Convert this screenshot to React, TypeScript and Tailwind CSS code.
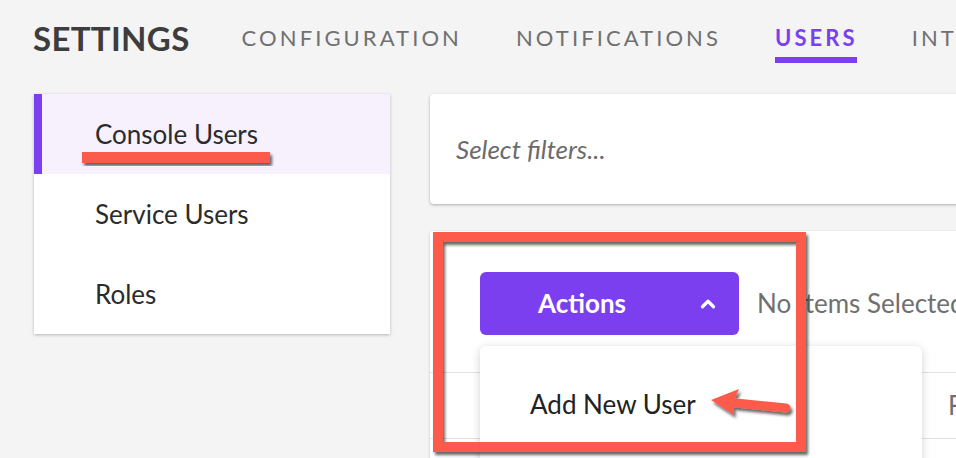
import { ChevronUp } from "lucide-react";

const tabs = ["CONFIGURATION", "NOTIFICATIONS", "USERS", "INTEGRATIONS"];
const sideItems = ["Console Users", "Service Users", "Roles"];

export default function App() {
  return (
    <div className="relative w-[956px] h-[458px] overflow-hidden bg-[#f4f4f4] font-['Lato',sans-serif]">
      {/* Top tabs */}
      <div className="flex items-start h-[94px] pl-[33px] pt-[18px] whitespace-nowrap">
        <h1 className="text-[33px] font-bold leading-[40px] text-[#3d3d3d] tracking-[0.01em] mr-[52px]">
          SETTINGS
        </h1>
        <nav className="flex gap-[54px]">
          {tabs.map((t) => {
            const active = t === "USERS";
            return (
              <div key={t} className="flex flex-col">
                <span
                  className={
                    active
                      ? "text-[22px] leading-[40px] tracking-[0.14em] font-bold text-[#7b3ff0]"
                      : "text-[22px] leading-[40px] tracking-[0.14em] text-[#707070]"
                  }
                >
                  {t}
                </span>
                {active && <span className="mt-[-1px] h-[6px] w-[82px] bg-[#7b3ff0]" />}
              </div>
            );
          })}
        </nav>
      </div>

      <div className="flex gap-[40px] pl-[34px]">
        {/* Sidebar */}
        <div className="w-[356px] shrink-0 self-start bg-white shadow-[0_1px_3px_rgba(0,0,0,0.25)]">
          {sideItems.map((s, i) => (
            <div
              key={s}
              className={
                i === 0
                  ? "h-[80px] flex items-center pl-[53px] bg-[#f6f1fd] border-l-[8px] border-[#7b3ff0] text-[26px] text-[#2b2b2b]"
                  : "h-[80px] flex items-center pl-[61px] text-[26px] text-[#2b2b2b]"
              }
            >
              {s}
            </div>
          ))}
        </div>

        {/* Right column */}
        <div className="w-[700px] shrink-0 flex flex-col gap-[27px]">
          <div className="h-[110px] flex items-center pl-[26px] bg-white rounded-[4px] shadow-[0_1px_3px_rgba(0,0,0,0.3)]">
            <span className="italic text-[26px] text-[#6b6b6b]">Select filters...</span>
          </div>

          <div className="relative h-[260px] bg-white rounded-[4px] shadow-[0_1px_3px_rgba(0,0,0,0.2)]">
            <div className="flex items-center pt-[41px] pl-[50px] whitespace-nowrap">
              <button className="w-[259px] h-[63px] shrink-0 rounded-[6px] bg-[#7b3ff0] flex items-center pl-[58px] pr-[20px] text-white">
                <span className="text-[26px] font-bold">Actions</span>
                <ChevronUp className="ml-auto" size={22} strokeWidth={3.5} />
              </button>
              <span className="ml-[18px] text-[26px] text-[#707070]">No Items Selected</span>
            </div>
            <div className="mt-[37px] border-t border-[#e2e2e2] h-[66px] flex items-center pl-[518px] text-[26px] text-[#707070]">
              F
            </div>
            <div className="border-t border-[#e2e2e2]" />

            {/* Dropdown menu */}
            <div className="absolute left-[50px] top-[115px] w-[442px] h-[200px] bg-white rounded-[6px] shadow-[0_2px_10px_rgba(0,0,0,0.18)] pt-[39px] pl-[50px]">
              <span className="text-[26px] text-[#222]">Add New User</span>
            </div>
          </div>
        </div>
      </div>

      {/* Annotations */}
      <svg className="absolute inset-0 pointer-events-none" width="956" height="458">
        <defs>
          <filter id="sh" x="-20%" y="-20%" width="140%" height="140%">
            <feDropShadow dx="2" dy="3" stdDeviation="1.5" floodColor="#000" floodOpacity="0.6" />
          </filter>
        </defs>
        <rect x="82" y="152" width="188" height="11" fill="#fc5a4c" filter="url(#sh)" />
        <rect x="438" y="237" width="363" height="210" fill="none" stroke="#fc5a4c" strokeWidth="10" filter="url(#sh)" />
        <g filter="url(#sh)">
          <line x1="736" y1="403" x2="786" y2="408" stroke="#fc5a4c" strokeWidth="9" strokeLinecap="round" />
          <path d="M711 400 L739 389 L733 403 L734 415 Z" fill="#fc5a4c" />
        </g>
      </svg>
    </div>
  );
}
